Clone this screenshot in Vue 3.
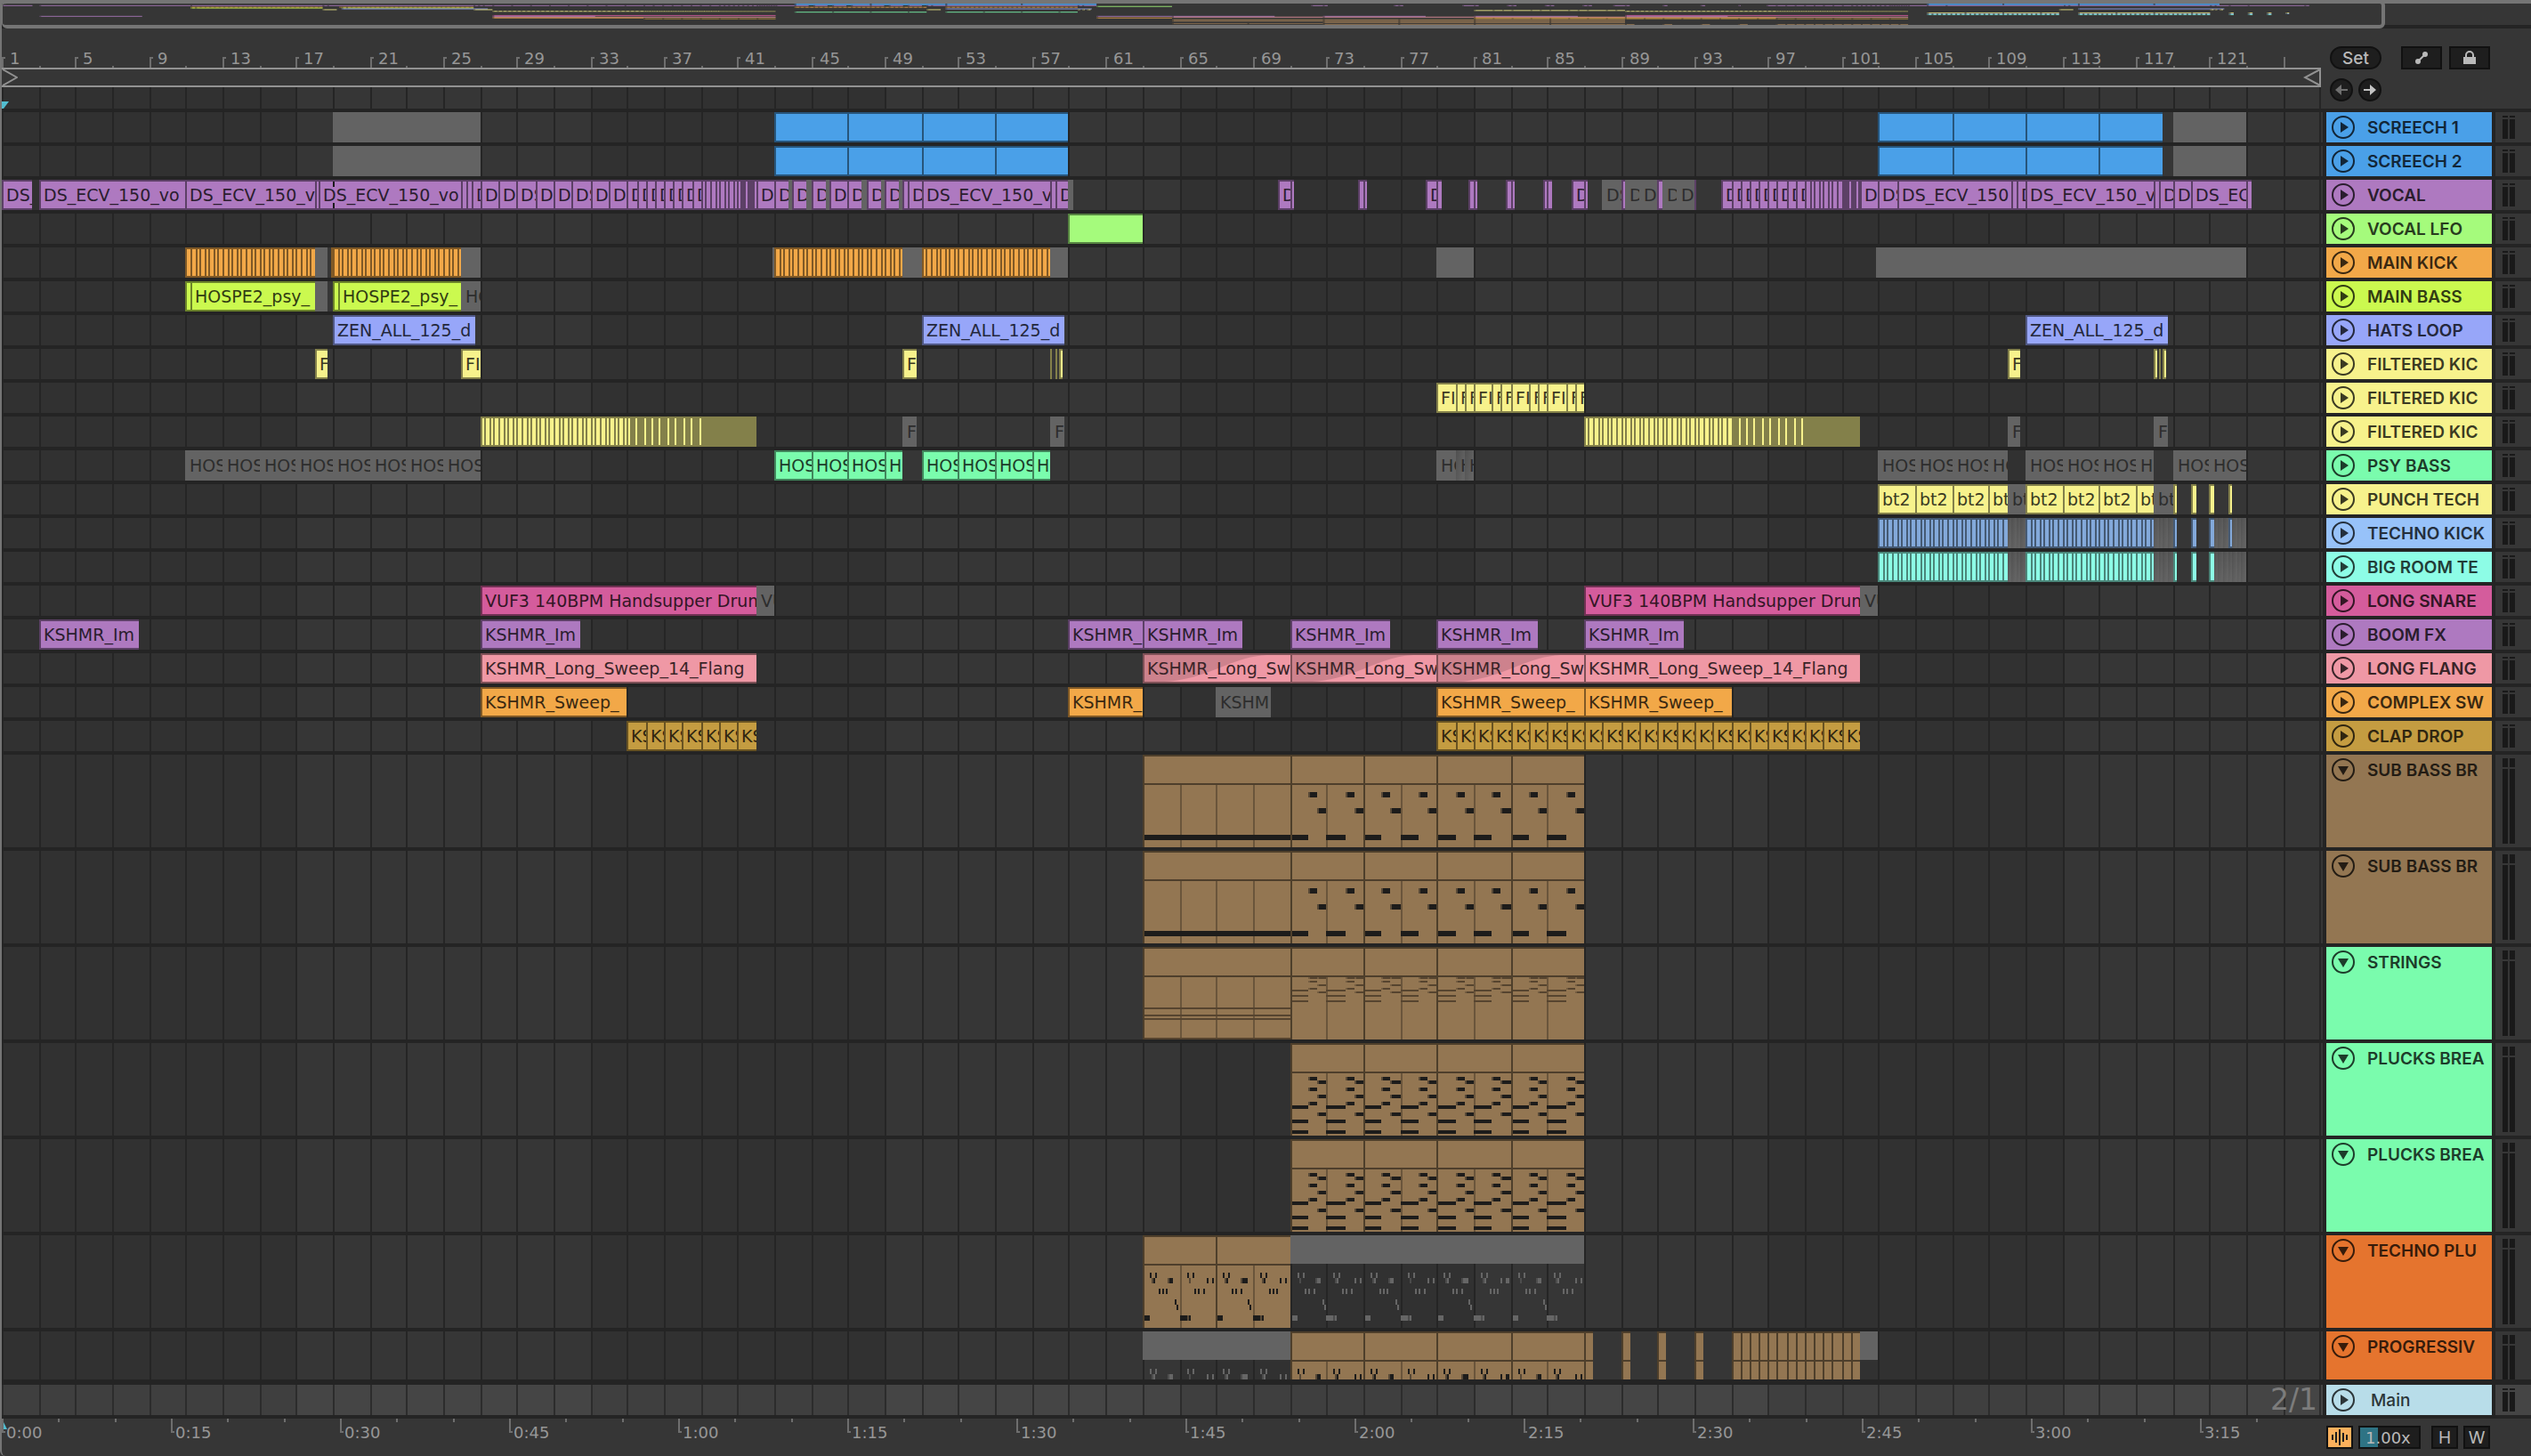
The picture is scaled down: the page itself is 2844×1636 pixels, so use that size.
<script setup>
const BAR_WIDTH = 20.672
const LAST_BAR = 127

// Horizontal position of a bar, snapped to the two-pixel grid of the view.
const x = (bar) => 2 * Math.round(((bar - 1) * BAR_WIDTH) / 2)

const range = (from, to, step) => {
  const out = []
  for (let v = from; v < to; v += step) out.push(v)
  return out
}

const clip = (start, end, label = '', kind = '') => ({ start, end, label, kind })
const muted = (start, end, label = '') => clip(start, end, label, 'muted')
const run = (from, to, step, label = '', kind = '') =>
  range(from, to, step).map((s) => clip(s, Math.min(s + step, to), label, kind))
const cuts = (points, label = '', kind = '') =>
  points.slice(1).map((p, i) => clip(points[i], p, label, kind))
const midi = (points, notes, kind = '') =>
  cuts(points, '', kind).map((c) => ({ ...c, notes }))

const vox = 'DS_ECV_150_vocal'
const psy = 'HOSPE2_psy_'
const tech = 'bt2_'
const filt = 'FILTERED'
const sweep = 'KSHMR_Long_Sweep_14_Flang'
const rise = 'KSHMR_Sweep_'
const snare = 'VUF3 140BPM Handsupper Drum'

const screech = () => [
  muted(19, 27),
  ...run(43, 59, 4),
  ...cuts([103, 107, 111, 115, 118.5]),
  muted(119, 123),
]
const roll = (s) => [
  ...run(s, s + 8, 0.25),
  ...run(s + 8, s + 12, 0.125),
  ...run(s + 12, s + 15, 0.0625),
]
const stabs = [
  [70.375, 71, 71.25], [74.75, 75, 75.25], [78.375, 79, 79.25], [80.75, 81, 81.25],
  [82.75, 83, 83.25], [84.75, 85, 85.25], [86.375, 87, 87.25],
]
const vocal = [
  clip(1, 2.625, vox),
  ...cuts([3, 11, 18, 18.25, 26, 26.25, 26.5, 27, 28, 29, 30, 31, 32, 33, 34, 35, 35.5, 36, 36.5, 37, 37.5, 38, 38.5, 39], vox),
  ...run(39, 41, 0.25),
  ...run(41, 42, 0.125),
  clip(42, 43, vox),
  ...[43, 44, 45, 47, 48, 49].flatMap((b) => [clip(b, b + 0.75, vox), muted(b + 0.75, b + 1)]),
  clip(46, 47, vox),
  ...cuts([50, 50.25, 51, 58, 58.25, 59], vox),
  muted(59, 59.25),
  ...stabs.flatMap((p) => cuts(p, vox)),
  muted(88, 89, vox), clip(89, 89.25), muted(89.25, 90, vox), muted(90, 91, vox),
  clip(91, 91.25), muted(91.25, 92, vox), muted(92, 93, vox), clip(93, 93.125),
  ...run(94.5, 99, 0.5, vox),
  ...run(99, 101, 0.25),
  ...run(101, 102, 0.125),
  ...cuts([102, 103, 104, 110.25, 110.5, 111, 118, 118.25, 119, 120, 123, 123.25], vox),
]
const stutter = () => [
  ...run(103, 110, 0.25), ...run(110, 111, 0.25, '', 'muted faded'),
  ...run(111, 118, 0.25), ...run(118, 119, 0.25, '', 'muted faded'),
  clip(119, 119.25), clip(120, 120.25), clip(121, 121.25),
  ...run(121.25, 123, 0.25, '', 'muted faded'),
]

// Notes of a two-bar cell: [from, to, y, height, soft attack]
const pluckNotes = [
  [1, 1.5, 38, 4, 1], [1.5, 2, 42, 4, 1], [1, 1.5, 50, 4, 1], [1.5, 2, 58, 4, 1],
  [1, 1.5, 66, 4, 1], [0, 1, 70, 4], [1.5, 2, 78, 4, 1], [0, 1, 86, 4], [0, 1, 98, 4],
]
const patterns = {
  subLong: () => [[0, 2, 90, 6]],
  sub: () => [[0, 1, 90, 6], [1, 1.5, 42, 6, 1], [1.5, 2, 60, 6, 1]],
  pad: () => [[0, 2, 68, 2], [0, 2, 76, 2], [0, 2, 80, 2], [0, 2, 102, 2]],
  strings: () => [
    [0, 1, 48, 2], [0, 1, 54, 2], [0, 1, 60, 2],
    [1, 1.5, 34, 2, 1], [1, 1.5, 38, 2, 1], [1, 1.5, 46, 2, 1],
    [1.5, 2, 34, 2, 1], [1.5, 2, 42, 2, 1], [1.5, 2, 50, 2, 1],
  ],
  pluck: () => pluckNotes,
  arp: (i) => [
    [0, 0.4, 90, 6], [0.4, 0.5, 42, 6], [0.7, 0.8, 42, 6], [0.5, 0.65, 48, 6, 1],
    [0.85, 0.95, 60, 6], [1.05, 1.15, 60, 6], [1.3, 1.4, 60, 6],
    ...(i % 2
      ? [[1.5, 1.6, 48, 6], [1.8, 1.9, 48, 6], [0.4, 0.6, 90, 6, 1]]
      : [[1.375, 1.7, 48, 6, 1], [1.75, 1.85, 72, 6], [1.85, 1.95, 78, 6]]),
  ],
}

const noteRects = (c) => {
  const out = []
  if (!patterns[c.notes]) return out
  range(c.start, c.end, 2).forEach((cell) => {
    patterns[c.notes](((cell - 63) / 2) % 4).forEach(([a, b, y, h, soft]) => {
      const left = x(cell + a) - x(c.start)
      const width = Math.max(2, x(cell + b) - x(cell + a))
      const lead = soft ? 2 : 0
      if (lead) out.push({ x: left, y, w: 2, h, o: 0.5 })
      if (width > lead) out.push({ x: left + lead, y, w: width - lead, h, o: 1 })
    })
  })
  return out
}
const cellLines = (c) => range(c.start + 2, c.end, 2).map((b) => x(b) - x(c.start))

const break4 = [71, 75, 79, 83, 87]
const tracks = [
  { name: 'SCREECH 1', color: '#4aa0e8', clips: screech() },
  { name: 'SCREECH 2', color: '#4aa0e8', clips: screech() },
  { name: 'VOCAL', color: '#ae79c0', clips: vocal, marks: [19] },
  { name: 'VOCAL LFO', color: '#a5fb7c', clips: [clip(59, 63)] },
  {
    name: 'MAIN KICK', color: '#f2a848',
    clips: [
      ...run(11, 18, 0.25), muted(18, 18.75), clip(18.875, 19), ...run(19, 26, 0.25), muted(26, 27),
      muted(42.875, 43), ...run(43, 50, 0.25), muted(50, 51), ...run(51, 58, 0.25), muted(58, 59),
      muted(79, 81), muted(102.875, 123),
    ],
  },
  {
    name: 'MAIN BASS', color: '#cbf94f',
    clips: [
      clip(11, 11.25), clip(11.25, 18, psy), muted(18, 18.75),
      clip(19, 19.25), clip(19.25, 26, psy), muted(26, 27, psy),
    ],
  },
  {
    name: 'HATS LOOP', color: '#97a6f9',
    clips: [19, 51, 111].map((b) => clip(b, b + 7.75, 'ZEN_ALL_125_drums')),
  },
  {
    name: 'FILTERED KIC', color: '#f7f28c',
    clips: [
      clip(18, 18.75, filt), clip(26, 27, filt), clip(50, 50.75, filt),
      clip(58, 58.125), clip(58.25, 58.375), clip(58.5, 58.6875),
      clip(110, 110.75, filt), clip(118, 118.1875), clip(118.25, 118.375), clip(118.5, 118.6875),
    ],
  },
  {
    name: 'FILTERED KIC', color: '#f7f28c',
    clips: cuts([79, 80, 80.5, 81, 82, 82.5, 83, 84, 84.5, 85, 86, 86.5, 87], filt),
  },
  {
    name: 'FILTERED KIC', color: '#f7f28c',
    clips: [
      ...roll(27), muted(50, 50.75, filt), muted(58, 58.75, filt),
      ...roll(87), muted(110, 110.75, filt), muted(118, 118.75, filt),
    ],
  },
  {
    name: 'PSY BASS', color: '#7afcad',
    clips: [
      ...run(11, 27, 2, psy, 'muted'),
      ...cuts([43, 45, 47, 49, 50], psy), ...cuts([51, 53, 55, 57, 58], psy),
      muted(79, 80, psy), clip(80, 80.5, psy, 'muted faded'), clip(80.5, 81, psy, 'muted faded'),
      ...cuts([103, 105, 107, 109, 110], psy, 'muted'),
      ...cuts([111, 113, 115, 117, 118], psy, 'muted'),
      ...cuts([119, 121, 123], psy, 'muted'),
    ],
  },
  {
    name: 'PUNCH TECH', color: '#f7f28c',
    clips: [
      ...cuts([103, 105, 107, 109, 110], tech), muted(110, 111, tech),
      ...cuts([111, 113, 115, 117, 118], tech), muted(118, 119, tech),
      clip(119, 119.25), clip(120, 120.25), clip(121, 121.25), clip(122, 122.1875),
    ],
  },
  { name: 'TECHNO KICK', color: '#97c2f9', dim: true, clips: [...stutter(), clip(122, 122.1875)] },
  { name: 'BIG ROOM TE', color: '#8dfde6', clips: stutter() },
  {
    name: 'LONG SNARE', color: '#d45c9c',
    clips: [clip(27, 42, snare), muted(42, 43, snare), clip(87, 102, snare), muted(102, 103, snare)],
  },
  {
    name: 'BOOM FX', color: '#ae79c0',
    clips: [
      [3, 8.4375], [27, 32.4375], [59, 63], [63, 68.4375], [71, 76.4375], [79, 84.5], [87, 92.4375],
    ].map(([a, b]) => clip(a, b, 'KSHMR_Im')),
  },
  {
    name: 'LONG FLANG', color: '#ef98a5',
    clips: [clip(27, 42, sweep), ...cuts([63, 71, 79, 87], sweep, 'fade-in'), clip(87, 102, sweep)],
  },
  {
    name: 'COMPLEX SW', color: '#f2a848',
    clips: [
      clip(27, 35, rise), clip(59, 63, rise), muted(67, 70, 'KSHM'),
      ...cuts([79, 87, 95], rise),
    ],
  },
  {
    name: 'CLAP DROP', color: '#c49c41',
    clips: [...run(35, 42, 1, 'KSHMR_Clap'), ...run(79, 102, 1, 'KSHMR_Clap')],
  },
  { name: 'SUB BASS BR', color: '#937652', tall: true, clips: [...midi([63, 71], 'subLong'), ...midi(break4, 'sub')] },
  { name: 'SUB BASS BR', color: '#937652', tall: true, clips: [...midi([63, 71], 'subLong'), ...midi(break4, 'sub')] },
  { name: 'STRINGS', color: '#7afcad', tall: true, soft: true, clips: [...midi([63, 71], 'pad'), ...midi(break4, 'strings')] },
  { name: 'PLUCKS BREA', color: '#7afcad', tall: true, clips: midi(break4, 'pluck') },
  { name: 'PLUCKS BREA', color: '#7afcad', tall: true, clips: midi(break4, 'pluck') },
  {
    name: 'TECHNO PLU', color: '#e5742e', tall: true,
    clips: [...midi([63, 67, 71], 'arp'), ...midi(break4, 'arp', 'muted')],
  },
  {
    name: 'PROGRESSIV', color: '#e5742e', tall: true, cut: true,
    clips: [
      ...midi([63, 71], 'arp', 'muted'), ...midi(break4, 'arp'),
      ...[87, 89, 91, 93].flatMap((b) => midi([b, b + 0.5], 'none')),
      ...range(95, 102, 0.5).flatMap((b) => midi([b, b + 0.5], 'none')),
      ...midi([102, 103], 'none', 'muted'),
    ],
  },
]

const clipColor = (track) => (track.tall ? '#937652' : track.dim ? '#83a9da' : track.color)
const widthOf = (c) => x(c.end) - x(c.start)
const place = (c) => ({ left: x(c.start) + 'px', width: widthOf(c) + 'px' })
const visible = (clips) => clips.filter((c) => widthOf(c) > 0)

// Only the characters that can show inside the clip are rendered.
const shown = (c) => {
  const room = widthOf(c) - 6
  if (room < 3) return ''
  if (room > 200) return c.label
  return c.label.slice(0, room < 50 ? Math.ceil(room / 12) : Math.round(room / 12))
}

const gridLines = range(1, LAST_BAR + 1, 2)
const shades = range(17, LAST_BAR, 32)
const barTicks = gridLines.slice(0, -1).map((b) => ({
  bar: b,
  major: (b - 1) % 4 === 0,
  label: (b - 1) % 4 === 0 && b < 125 ? b : '',
}))
const timeTicks = range(0, 41, 1).map((i) => {
  const sec = i * 5
  return {
    left: Math.round((i * 190) / 3),
    major: i % 3 === 0,
    label: i % 3 === 0 ? `${Math.floor(sec / 60)}:${String(sec % 60).padStart(2, '0')}` : '',
  }
})
const overview = tracks.flatMap((t, row) =>
  t.clips
    .filter((c) => !c.kind.includes('muted'))
    .map((c) => ({ x: c.start - 1, w: c.end - c.start, y: row, color: clipColor(t) })),
)
</script>

<template>
  <main class="set">
    <div class="overview">
      <svg class="overview-map" viewBox="0 0 134 26" preserveAspectRatio="none" aria-hidden="true">
        <g v-for="(o, i) in overview" :key="i">
          <rect :x="o.x" :y="o.y" :width="o.w" height="1" :fill="o.color" opacity="0.9" />
          <rect :x="o.x" :y="o.y" width="0.09" height="1" fill="#242424" opacity="0.6" />
        </g>
      </svg>
      <div class="overview-frame"></div>
    </div>

    <div class="columns">
      <section class="timeline">
        <div class="ruler">
          <div
            v-for="t in barTicks"
            :key="t.bar"
            class="bar-tick"
            :class="{ major: t.major, bare: t.major && !t.label }"
            :style="{ left: x(t.bar) + 'px' }"
          >{{ t.label }}</div>
        </div>
        <div class="loop">
          <svg width="18" height="18" viewBox="0 0 18 18"><path d="M1 0L17 9L1 18" /></svg>
          <svg width="20" height="18" viewBox="0 0 20 18"><path d="M19 0V18M19 0L2 9L19 18" /></svg>
        </div>

        <div class="arrangement">
          <svg class="grid" aria-hidden="true">
            <rect v-for="s in shades" :key="'s' + s" :x="x(s)" y="0" :width="x(s + 16) - x(s)" height="100%" fill="#363636" />
            <rect v-for="b in gridLines" :key="b" :x="x(b)" y="0" width="2" height="100%" fill="#252525" />
          </svg>
          <div class="locators">
            <svg width="8" height="8" viewBox="0 0 8 8"><path d="M0 0H8L2 8H0Z" fill="#52bdd0" /></svg>
          </div>
          <div v-for="(t, i) in tracks" :key="i" class="lane" :class="{ tall: t.tall, cut: t.cut, soft: t.soft }" :style="{ '--c': clipColor(t) }">
            <div v-for="(c, j) in visible(t.clips)" :key="j" class="clip" :class="[c.kind, { midi: c.notes }]" :style="place(c)">
              <svg v-if="c.kind === 'fade-in'" class="fade" viewBox="0 0 100 100" preserveAspectRatio="none"><path d="M0 0H84C60 6 44 90 14 100H0Z" /></svg>
              <svg v-if="c.notes" class="notes" aria-hidden="true">
                <rect v-for="l in cellLines(c)" :key="'l' + l" class="cell" :x="l" y="34" width="2" height="70" />
                <rect v-for="(n, k) in noteRects(c)" :key="k" class="note" :x="n.x" :y="n.y" :width="n.w" :height="n.h" :fill-opacity="n.o" />
              </svg>
              <span v-if="shown(c)">{{ shown(c) }}</span>
            </div>
            <i v-for="m in t.marks" :key="'m' + m" class="mark" :style="{ left: x(m) + 'px' }"></i>
          </div>
        </div>

        <div class="main-lane">
          <svg class="grid" aria-hidden="true">
            <rect v-for="s in shades" :key="'s' + s" :x="x(s)" y="0" :width="x(s + 16) - x(s)" height="100%" fill="#454545" />
            <rect v-for="b in gridLines" :key="b" :x="x(b)" y="0" width="2" height="100%" fill="#2c2c2c" />
          </svg>
          <span class="grid-size">2/1</span>
        </div>

        <div class="time-ruler">
          <svg class="start-flag" width="6" height="12" viewBox="0 0 6 12"><path d="M0 0L6 12H0Z" fill="#52bdd0" /></svg>
          <div v-for="t in timeTicks" :key="t.left" class="time-tick" :class="{ major: t.major }" :style="{ left: t.left + 'px' }">{{ t.label }}</div>
        </div>
      </section>

      <aside class="side">
        <div class="controls">
          <div class="control-row">
            <button class="pill">Set</button>
            <button class="square" aria-label="Automation mode">
              <svg width="16" height="16" viewBox="0 0 16 16"><path d="M4 12L12 4" stroke="#b9b9b9" stroke-width="2" /><circle cx="4" cy="12" r="3" fill="#b9b9b9" /><circle cx="12" cy="4" r="3" fill="#b9b9b9" /></svg>
            </button>
            <button class="square" aria-label="Lock envelopes">
              <svg width="14" height="16" viewBox="0 0 14 16"><path d="M3 8V5a4 4 0 0 1 8 0V8" fill="none" stroke="#b9b9b9" stroke-width="2" /><rect y="7" width="14" height="8" fill="#b9b9b9" /></svg>
            </button>
          </div>
          <div class="control-row arrows">
            <button class="round off" aria-label="Previous locator">
              <svg width="14" height="12" viewBox="0 0 14 12"><path d="M0 6L7 0V5H14V7H7V12Z" /></svg>
            </button>
            <button class="round" aria-label="Next locator">
              <svg width="14" height="12" viewBox="0 0 14 12"><path d="M14 6L7 0V5H0V7H7V12Z" /></svg>
            </button>
          </div>
        </div>

        <div v-for="(t, i) in tracks" :key="i" class="head" :class="{ tall: t.tall, cut: t.cut }" :style="{ '--c': t.color }">
          <div class="title">
            <button class="fold" :aria-label="'Fold ' + t.name">
              <svg width="26" height="26" viewBox="0 0 26 26">
                <circle cx="13" cy="13" r="12" />
                <path v-if="t.tall" d="M7 9H19L13 19Z" />
                <path v-else d="M10 7V19L19 13Z" />
              </svg>
            </button>
            <span>{{ t.name }}</span>
          </div>
          <div class="meter"><i></i><i></i><b></b><b></b></div>
        </div>

        <div class="head master">
          <div class="title">
            <button class="fold" aria-label="Fold Main">
              <svg width="26" height="26" viewBox="0 0 26 26"><circle cx="13" cy="13" r="12" /><path d="M10 7V19L19 13Z" /></svg>
            </button>
            <span>Main</span>
          </div>
          <div class="meter"><i></i><i></i><b></b><b></b></div>
        </div>

        <div class="zoom-row">
          <button class="wave" aria-label="Waveform view">
            <svg width="18" height="18" viewBox="0 0 18 18"><path d="M1 6V12M5 3V15M9 0V18M13 4V14M17 6V12" stroke="#1d1d1d" stroke-width="2" /></svg>
          </button>
          <input class="factor" type="text" value="1.00x" aria-label="Waveform zoom" />
          <button class="letter">H</button>
          <button class="letter">W</button>
        </div>
      </aside>
    </div>
  </main>
</template>

<style>
body {
  background: #363636;
}
</style>

<style scoped>
.set {
  border-left: 2px solid #757575;
  border-bottom-left-radius: 6px;
  background: #363636;
  font-family: "DejaVu Sans", sans-serif;
  font-size: 18px;
  color: #969696;
  overflow: hidden;
}
button {
  padding: 0;
  margin: 0;
  font: inherit;
  box-sizing: border-box;
  display: flex;
  align-items: center;
  justify-content: center;
}

/* overview */
.overview {
  position: relative;
  box-sizing: border-box;
  height: 32px;
  border-top: 4px solid #757575;
  border-bottom: 4px solid #242424;
}
.overview-map {
  display: block;
  width: 100%;
  height: 24px;
}
.overview-frame {
  position: absolute;
  inset: -4px 164px -4px 0;
  border: 4px solid #757575;
  border-left-width: 1px;
  border-radius: 6px;
}

.columns {
  display: flex;
}
.timeline {
  flex: 1;
  min-width: 0;
  overflow: hidden;
}

/* bar ruler */
.ruler {
  position: relative;
  height: 44px;
  overflow: hidden;
}
.bar-tick {
  position: absolute;
  bottom: 0;
  height: 2px;
  border-left: 2px solid #6e6e6e;
}
.bar-tick.major {
  box-sizing: border-box;
  width: 4px;
  height: 12px;
  border-top: 2px solid #6e6e6e;
  text-indent: 7px;
  line-height: 0;
}
.bar-tick.bare {
  width: 2px;
}
.loop {
  display: flex;
  justify-content: space-between;
  height: 18px;
  margin-right: 2px;
  border: 2px solid #929292;
  border-width: 2px 0;
}
.loop path {
  fill: none;
  stroke: #929292;
  stroke-width: 2;
}

/* arrangement */
.arrangement {
  position: relative;
  background: #313131;
}
.grid {
  position: absolute;
  inset: 0;
  width: 100%;
  height: 100%;
}
.locators {
  position: relative;
  display: flex;
  align-items: flex-end;
  height: 24px;
  border-bottom: 4px solid #242424;
}
.lane {
  position: relative;
  height: 34px;
  border-bottom: 4px solid #242424;
  overflow: hidden;
}
.tall {
  height: 104px;
}
.cut {
  height: 54px;
  border-bottom-width: 6px;
}
.clip {
  position: absolute;
  top: 0;
  bottom: 0;
  box-sizing: border-box;
  border: 2px solid color-mix(in srgb, var(--c) 53%, black);
  border-right: 0;
  background: var(--c);
  color: color-mix(in srgb, var(--c) 24%, black);
  font-size: 19px;
  line-height: 30px;
  white-space: nowrap;
  overflow: hidden;
  text-indent: 3px;
}
.clip.muted {
  border-color: transparent;
  background: #636363;
  background-clip: border-box;
  color: #2d2d2d;
}
.clip.faded {
  background: linear-gradient(100deg, #505050, #636363 80%) border-box;
}
.clip span {
  position: relative;
}
.fade {
  position: absolute;
  inset: 0;
  width: 100%;
  height: 100%;
  fill: rgba(0, 0, 0, 0.14);
}
.clip.midi {
  border-bottom: 0;
  background: linear-gradient(color-mix(in srgb, var(--c) 53%, black), color-mix(in srgb, var(--c) 53%, black)) 0 30px / 100% 2px no-repeat var(--c);
}
.clip.midi.muted {
  background: linear-gradient(#636363, #636363) 0 -2px / 100% 34px no-repeat border-box;
}
.notes {
  position: absolute;
  left: -2px;
  top: -2px;
  width: calc(100% + 2px);
  height: 104px;
}
.cell {
  fill: color-mix(in srgb, var(--c) 72%, black);
}
.note {
  fill: #1d1c1b;
}
.soft .note {
  fill: #56442f;
}
.muted .note {
  fill: #666666;
}
.muted .cell {
  fill: #252525;
}
.mark {
  position: absolute;
  top: 2px;
  width: 2px;
  height: 18px;
  border: solid #1a1a1a;
  border-width: 6px 0;
}

/* main lane */
.main-lane {
  position: relative;
  display: flex;
  justify-content: flex-end;
  height: 34px;
  background: #3f3f3f;
  border-bottom: 4px solid #242424;
}
.grid-size {
  position: relative;
  padding-right: 6px;
  font-size: 33px;
  line-height: 34px;
  color: #7c7c7c;
}

/* time ruler */
.time-ruler {
  position: relative;
  height: 42px;
}
.start-flag {
  position: absolute;
  left: 0;
  top: 0;
}
.time-tick {
  position: absolute;
  top: 0;
  height: 4px;
  border-left: 2px solid #6e6e6e;
}
.time-tick.major {
  box-sizing: border-box;
  width: 4px;
  height: 16px;
  border-bottom: 2px solid #6e6e6e;
  text-indent: 3px;
  line-height: 32px;
}

/* side */
.side {
  flex: none;
  width: 234px;
  font-family: Inter, "Liberation Sans", sans-serif;
  font-size: 19px;
}
.controls {
  box-sizing: border-box;
  height: 94px;
  padding: 20px 0 0 8px;
  border-bottom: 4px solid #242424;
}
.control-row {
  display: flex;
  gap: 8px;
}
.control-row.arrows {
  gap: 6px;
  margin-top: 10px;
}
.pill,
.square,
.round {
  height: 26px;
  border: 2px solid #111111;
  background: #1e1e1e;
  color: #b9b9b9;
}
.pill {
  width: 58px;
  margin-right: 14px;
  border-radius: 13px;
  font-weight: 500;
}
.square {
  width: 46px;
}
.round {
  width: 26px;
  border-radius: 50%;
  fill: #c4c4c4;
}
.round.off {
  fill: #6f6f6f;
}
.head {
  display: flex;
  gap: 4px;
  box-sizing: content-box;
  height: 34px;
  background: #242424;
  border-left: 4px solid #242424;
  border-bottom: 4px solid #242424;
}
.head.tall {
  height: 104px;
}
.head.cut {
  height: 54px;
  border-bottom-width: 6px;
}
.title {
  flex: none;
  display: flex;
  align-items: flex-start;
  box-sizing: border-box;
  width: 186px;
  gap: 14px;
  padding-left: 6px;
  background: var(--c);
  color: color-mix(in srgb, var(--c) 24%, black);
  font-weight: 600;
  line-height: 36px;
  white-space: nowrap;
  overflow: hidden;
}
.fold {
  flex: none;
  width: 26px;
  height: 34px;
  border: 0;
  background: none;
  color: inherit;
}
.fold svg {
  fill: currentColor;
}
.fold circle {
  fill: none;
  stroke: currentColor;
  stroke-width: 2;
}
.meter {
  flex: 1;
  display: grid;
  grid-template: 2px 1fr / 6px 6px;
  gap: 2px;
  padding: 4px 8px;
  background: #363636;
}
.meter i,
.meter b {
  background: #191919;
}
.tall .meter {
  grid-template-rows: 10px 1fr;
}
.cut .meter {
  padding-bottom: 0;
}
.master {
  --c: #b8dde9;
}
.master .title {
  gap: 18px;
  font-weight: 500;
}
.master .meter {
  background: #454545;
}
.zoom-row {
  display: flex;
  gap: 6px;
  padding: 8px 0 0 4px;
}
.wave,
.letter,
.factor {
  box-sizing: border-box;
  width: 30px;
  height: 26px;
  border: 2px solid #111111;
  background: #1e1e1e;
  color: #b9b9b9;
}
.wave {
  background: #fbb05c;
}
.factor {
  width: 70px;
  margin: 0 6px 0 0;
  padding: 0 0 0 6px;
  font-family: "DejaVu Sans", sans-serif;
  font-size: 18px;
  background: linear-gradient(90deg, #2e7384 20px, #1e1e1e 20px);
}
</style>
